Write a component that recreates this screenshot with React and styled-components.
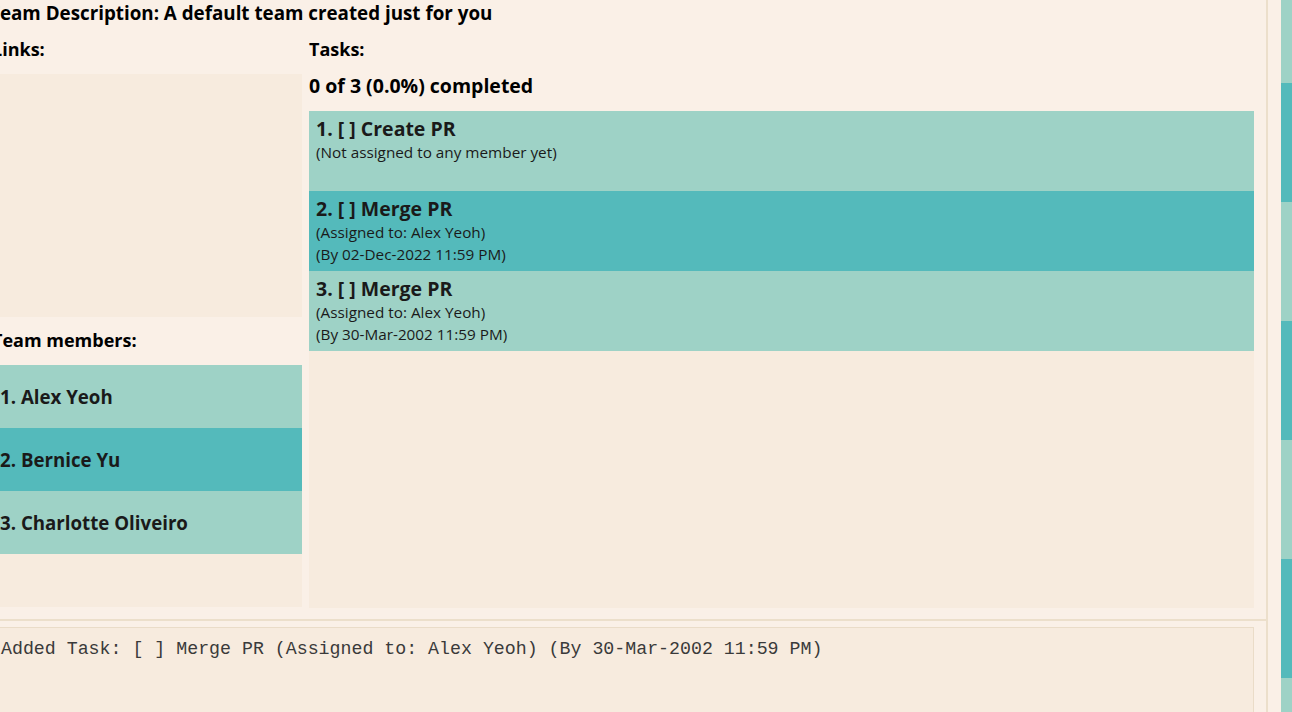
import styled, { createGlobalStyle } from "styled-components";

const GlobalStyle = createGlobalStyle`
  html, body {
    margin: 0;
    padding: 0;
    background: #faf0e7;
    font-family: "Open Sans", "Noto Sans", sans-serif;
    overflow: hidden;
  }
`;

const members = ["Alex Yeoh", "Bernice Yu", "Charlotte Oliveiro"];

const tasks = [
  { title: "Create PR", lines: ["(Not assigned to any member yet)"] },
  { title: "Merge PR", lines: ["(Assigned to: Alex Yeoh)", "(By 02-Dec-2022 11:59 PM)"] },
  { title: "Merge PR", lines: ["(Assigned to: Alex Yeoh)", "(By 30-Mar-2002 11:59 PM)"] },
];

const stripes = [83, 119, 119, 119, 119, 119, 119];

export default function App() {
  return (
    <Window>
      <GlobalStyle />
      <Main>
        <Top>
          <Title>Team Description: A default team created just for you</Title>
          <Columns>
            <LeftCol>
              <Label>Links:</Label>
              <LinksPanel />
              <Label>Team members:</Label>
              <MemberList>
                {members.map((m, i) => (
                  <Member key={m} dark={i % 2 === 1}>
                    {i + 1}. {m}
                  </Member>
                ))}
              </MemberList>
            </LeftCol>
            <RightCol>
              <Label>Tasks:</Label>
              <Progress>0 of 3 (0.0%) completed</Progress>
              <TaskList>
                {tasks.map((t, i) => (
                  <Task key={i} dark={i % 2 === 1}>
                    <TaskTitle>
                      {i + 1}. [ ] {t.title}
                    </TaskTitle>
                    {t.lines.map((l) => (
                      <TaskLine key={l}>{l}</TaskLine>
                    ))}
                  </Task>
                ))}
              </TaskList>
            </RightCol>
          </Columns>
        </Top>
        <HDivider />
        <ResultArea>
          <ResultBox>Added Task: [ ] Merge PR (Assigned to: Alex Yeoh) (By 30-Mar-2002 11:59 PM)</ResultBox>
        </ResultArea>
      </Main>
      <VDivider />
      <Gutter />
      <Stripes>
        {stripes.map((h, i) => (
          <Stripe key={i} h={h} dark={i % 2 === 1} />
        ))}
      </Stripes>
    </Window>
  );
}

const Window = styled.div`
  display: flex;
  width: 1292px;
  height: 712px;
  overflow: hidden;
  background: #faf0e7;
`;

const Main = styled.div`
  width: 1274px;
  margin-left: -8px;
  flex-shrink: 0;
  display: flex;
  flex-direction: column;
`;

const Top = styled.div`
  height: 619px;
  display: flex;
  flex-direction: column;
`;

const Title = styled.div`
  margin-left: -3px;
  font-weight: 700;
  font-size: 18.8px;
  line-height: 26px;
  height: 26px;
  white-space: nowrap;
  color: #000;
`;

const Columns = styled.div`
  display: flex;
  gap: 7px;
  padding-right: 12px;
`;

const LeftCol = styled.div`
  width: 310px;
  display: flex;
  flex-direction: column;
`;

const RightCol = styled.div`
  flex: 1;
  display: flex;
  flex-direction: column;
`;

const Label = styled.div`
  font-weight: 700;
  font-size: 18px;
  line-height: 22px;
  padding: 12px 0 14px;
  color: #000;
`;

const LinksPanel = styled.div`
  height: 243px;
  background: #f7ebde;
`;

const MemberList = styled.div`
  height: 242px;
  background: #f7ebde;
`;

const Member = styled.div`
  height: 63px;
  display: flex;
  align-items: center;
  padding-left: 8px;
  background: ${(p) => (p.dark ? "#54babb" : "#9ed2c6")};
  font-weight: 700;
  font-size: 18.7px;
  color: #1a1a1a;
`;

const Progress = styled.div`
  font-weight: 700;
  font-size: 19.5px;
  line-height: 24px;
  padding-bottom: 13px;
  color: #000;
`;

const TaskList = styled.div`
  height: 497px;
  background: #f7ebde;
`;

const Task = styled.div`
  height: 80px;
  box-sizing: border-box;
  padding: 6px 7px;
  background: ${(p) => (p.dark ? "#54babb" : "#9ed2c6")};
  color: #1a1a1a;
`;

const TaskTitle = styled.div`
  font-weight: 700;
  font-size: 19.5px;
  line-height: 24px;
`;

const TaskLine = styled.div`
  font-size: 15.3px;
  line-height: 22px;
`;

const HDivider = styled.div`
  height: 2px;
  background: #ecdfcb;
`;

const ResultArea = styled.div`
  flex: 1;
  padding: 6px 12px 0 0;
`;

const ResultBox = styled.div`
  height: 100%;
  border: 1px solid #eadcc8;
  border-left: none;
  background: #f7ebde;
  padding: 10px 0 0 9px;
  font-family: "Liberation Mono", "Courier New", monospace;
  font-size: 18.25px;
  line-height: 22px;
  white-space: nowrap;
  color: #3a3a3a;
`;

const VDivider = styled.div`
  width: 2px;
  flex-shrink: 0;
  background: #ecdfcb;
`;

const Gutter = styled.div`
  width: 13px;
  flex-shrink: 0;
  background: #faf0e7;
`;

const Stripes = styled.div`
  width: 11px;
  flex-shrink: 0;
  display: flex;
  flex-direction: column;
`;

const Stripe = styled.div`
  height: ${(p) => p.h}px;
  flex-shrink: 0;
  background: ${(p) => (p.dark ? "#54babb" : "#9ed2c6")};
`;
